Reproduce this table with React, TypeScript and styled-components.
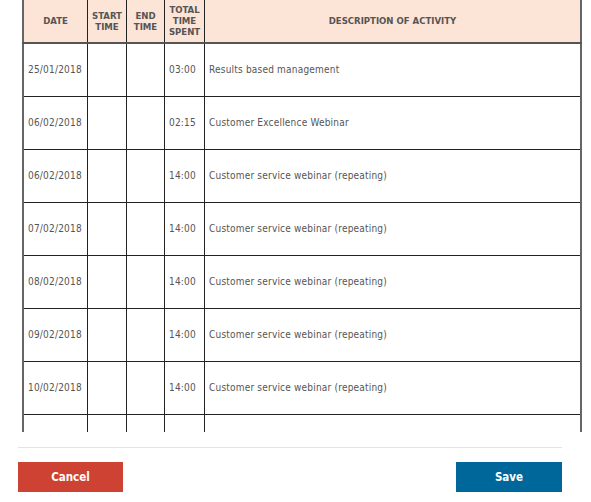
import React, { useLayoutEffect, useRef } from "react";
import styled, { createGlobalStyle } from "styled-components";

const Global = createGlobalStyle`
  html, body { margin: 0; padding: 0; background: #fff; }
  body { font-family: "DejaVu Sans Condensed", "DejaVu Sans", sans-serif; }
`;

const Page = styled.div`
  width: 591px;
  height: 502px;
  overflow: hidden;
  background: #fff;
`;

const ScrollArea = styled.div`
  margin-left: 22px;
  width: 561px;
  height: 432px;
  overflow: hidden;
`;

const Table = styled.table`
  border-collapse: collapse;
  width: 560px;
  table-layout: fixed;
  border: 2px solid #666;
`;

const HeadCell = styled.th<{ $w?: number }>`
  width: ${(p) => (p.$w ? `${p.$w}px` : "auto")};
  background: #fce4d6;
  color: #555;
  font-size: 9.5px;
  font-weight: bold;
  text-transform: uppercase;
  line-height: 11px;
  padding: 4px 2px 5px;
  border: 1px solid #222;
  border-bottom: 2px solid #555;
  text-align: center;
  vertical-align: middle;
`;

const Row = styled.tr`
  height: 53px;
`;

const Cell = styled.td`
  border: 1px solid #222;
  color: #555;
  font-size: 10px;
  letter-spacing: 0.2px;
  padding: 0 4px;
  vertical-align: middle;
  white-space: nowrap;
  overflow: hidden;
`;

const Footer = styled.div`
  padding: 15px 29px 0 18px;
`;

const Separator = styled.hr`
  margin: 0;
  border: none;
  border-top: 1px solid #e4e4e4;
`;

const Actions = styled.div`
  display: flex;
  justify-content: space-between;
  margin-top: 14px;
`;

const Button = styled.button<{ $variant: "cancel" | "save" }>`
  width: ${(p) => (p.$variant === "cancel" ? "105px" : "106px")};
  height: 30px;
  border: none;
  background: ${(p) => (p.$variant === "cancel" ? "#cd4232" : "#00679a")};
  color: #fff;
  font-family: "DejaVu Sans Condensed", "DejaVu Sans", sans-serif;
  font-weight: bold;
  font-size: 11.5px;
  cursor: pointer;
`;

const rows = [
  { date: "25/01/2018", total: "03:00", desc: "Results based management" },
  { date: "06/02/2018", total: "02:15", desc: "Customer Excellence Webinar" },
  { date: "06/02/2018", total: "14:00", desc: "Customer service webinar (repeating)" },
  { date: "07/02/2018", total: "14:00", desc: "Customer service webinar (repeating)" },
  { date: "08/02/2018", total: "14:00", desc: "Customer service webinar (repeating)" },
  { date: "09/02/2018", total: "14:00", desc: "Customer service webinar (repeating)" },
  { date: "10/02/2018", total: "14:00", desc: "Customer service webinar (repeating)" },
  { date: "", total: "", desc: "" },
];

export default function App() {
  const ref = useRef<HTMLDivElement>(null);
  useLayoutEffect(() => {
    if (ref.current) ref.current.scrollTop = 2;
  }, []);
  return (
    <Page>
      <Global />
      <ScrollArea ref={ref}>
        <Table>
          <thead>
            <tr>
              <HeadCell $w={59}>Date</HeadCell>
              <HeadCell $w={34}>Start Time</HeadCell>
              <HeadCell $w={33}>End Time</HeadCell>
              <HeadCell $w={35}>Total Time Spent</HeadCell>
              <HeadCell>Description of Activity</HeadCell>
            </tr>
          </thead>
          <tbody>
            {rows.map((r, i) => (
              <Row key={i}>
                <Cell>{r.date}</Cell>
                <Cell />
                <Cell />
                <Cell>{r.total}</Cell>
                <Cell>{r.desc}</Cell>
              </Row>
            ))}
          </tbody>
        </Table>
      </ScrollArea>
      <Footer>
        <Separator />
        <Actions>
          <Button $variant="cancel">Cancel</Button>
          <Button $variant="save">Save</Button>
        </Actions>
      </Footer>
    </Page>
  );
}
